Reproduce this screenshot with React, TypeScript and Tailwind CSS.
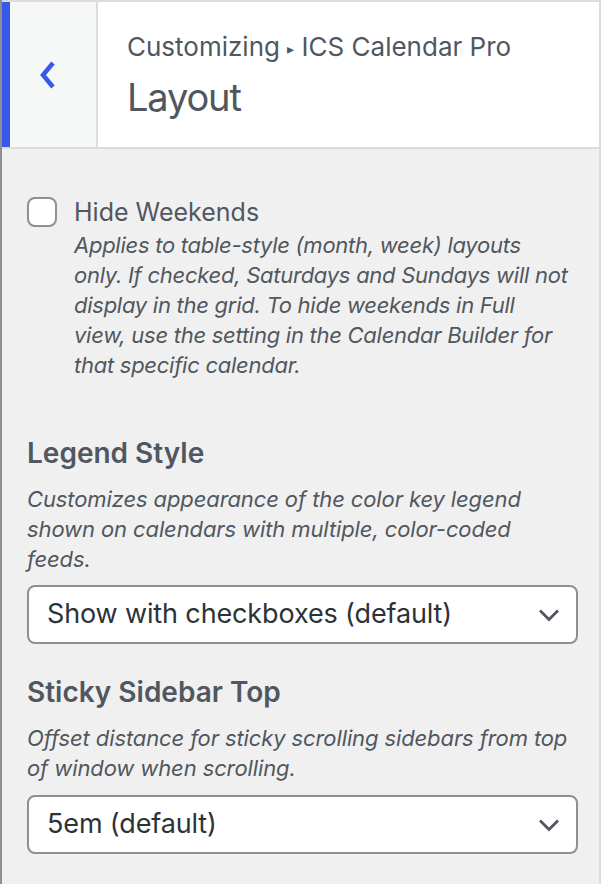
import React from "react";

const font = { fontFamily: "Inter, 'Noto Sans', sans-serif" };

const Chevron = () => (
  <svg width="22" height="14" viewBox="0 0 22 14" fill="none">
    <path d="M2 2.5L11 11.5L20 2.5" stroke="#50575e" strokeWidth="2.8" />
  </svg>
);

const SelectBox = ({ value }: { value: string }) => (
  <div className="flex h-[59px] items-center justify-between rounded-[8px] border-2 border-[#8c8f94] bg-white pl-[18px] pr-[16px]">
    <span className="text-[27px] tracking-[-0.005em] text-[#2c3338]">{value}</span>
    <Chevron />
  </div>
);

const App = () => {
  return (
    <div
      style={font}
      className="flex h-[884px] w-[601px] flex-col border-l-2 border-r-2 border-l-[#8c8f94] border-r-[#dcdcde] bg-[#f0f0f1]"
    >
      <div className="flex h-[149px] border-b-2 border-t-2 border-[#dcdcde] bg-white">
        <div className="flex w-[96px] items-center justify-center border-l-[8px] border-r-2 border-l-[#3858e9] border-r-[#dcdcde] bg-[#f6f7f7] pr-[10px]">
          <svg width="20" height="30" viewBox="0 0 20 30" fill="none">
            <path d="M15 3L5 15L15 27" stroke="#3858e9" strokeWidth="4.5" />
          </svg>
        </div>
        <div className="flex flex-col pl-[29px] pt-[28px]">
          <div className="text-[26px] leading-[34px] text-[#50575e]">
            Customizing <span className="text-[14px] align-middle">▸</span> ICS Calendar Pro
          </div>
          <div className="mt-[7px] text-[38px] leading-[48px] tracking-[-0.03em] text-[#50575e]">Layout</div>
        </div>
      </div>

      <div className="flex flex-col pl-[25px] pr-[21px] pt-[46px]">
        <div className="flex gap-[17px]">
          <div className="mt-[2px] h-[30px] w-[30px] shrink-0 rounded-[8px] border-2 border-[#8c8f94] bg-white" />
          <div className="flex flex-col">
            <div className="text-[25px] leading-[34px] text-[#50575e]">Hide Weekends</div>
            <p className="mt-[1px] whitespace-nowrap text-[22px] italic leading-[30px] tracking-[-0.012em] text-[#50575e]">
              Applies to table-style (month, week) layouts
              <br />
              only. If checked, Saturdays and Sundays will not
              <br />
              display in the grid. To hide weekends in Full
              <br />
              view, use the setting in the Calendar Builder for
              <br />
              that specific calendar.
            </p>
          </div>
        </div>

        <div className="mt-[56px] text-[28px] font-semibold leading-[34px] text-[#50575e]">Legend Style</div>
        <p className="mt-[14px] text-[22px] italic leading-[30px] tracking-[-0.005em] text-[#50575e]">
          Customizes appearance of the color key legend shown on calendars with multiple, color-coded feeds.
        </p>
        <div className="mt-[11px]">
          <SelectBox value="Show with checkboxes (default)" />
        </div>

        <div className="mt-[31px] text-[28px] font-semibold leading-[34px] text-[#50575e]">Sticky Sidebar Top</div>
        <p className="mt-[14px] text-[22px] italic leading-[30px] tracking-[-0.005em] text-[#50575e]">
          Offset distance for sticky scrolling sidebars from top of window when scrolling.
        </p>
        <div className="mt-[12px]">
          <SelectBox value="5em (default)" />
        </div>
      </div>
    </div>
  );
};

export default App;
